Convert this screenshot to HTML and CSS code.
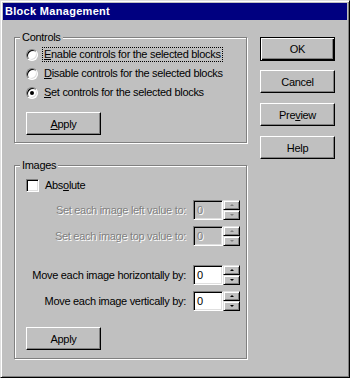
FILE: index.html
```html
<!DOCTYPE html>
<html lang="en">
<head>
    <meta charset="UTF-8">
    <title>Block Management</title>
    <link rel="stylesheet" href="styles.css">
</head>
<body>
    <div class="dialog">
        <div class="titlebar">Block Management</div>
        <div class="dialog-body">
            <div class="groups">
                <fieldset class="group controls">
                    <legend>Controls</legend>
                    <div class="option"><span class="radio"></span><span class="option-text focus"><u>E</u>nable controls for the selected blocks</span></div>
                    <div class="option"><span class="radio"></span><span class="option-text"><u>D</u>isable controls for the selected blocks</span></div>
                    <div class="option"><span class="radio checked"></span><span class="option-text"><u>S</u>et controls for the selected blocks</span></div>
                    <button class="btn apply"><u>A</u>pply</button>
                </fieldset>
                <fieldset class="group images">
                    <legend>Images</legend>
                    <div class="option check-row"><span class="checkbox"></span><span class="option-text">Abs<u>o</u>lute</span></div>
                    <div class="field disabled first">
                        <span class="field-label">Set each image left value to:</span>
                        <span class="edit">0</span>
                        <span class="spin"><span class="spin-btn up"></span><span class="spin-btn down"></span></span>
                    </div>
                    <div class="field disabled">
                        <span class="field-label">Set each image top value to:</span>
                        <span class="edit">0</span>
                        <span class="spin"><span class="spin-btn up"></span><span class="spin-btn down"></span></span>
                    </div>
                    <div class="field move">
                        <span class="field-label">Move each image horizontally by:</span>
                        <span class="edit">0</span>
                        <span class="spin"><span class="spin-btn up"></span><span class="spin-btn down"></span></span>
                    </div>
                    <div class="field">
                        <span class="field-label">Move each image vertically by:</span>
                        <span class="edit">0</span>
                        <span class="spin"><span class="spin-btn up"></span><span class="spin-btn down"></span></span>
                    </div>
                    <button class="btn apply apply-images">Apply</button>
                </fieldset>
            </div>
            <div class="actions">
                <button class="btn default">OK</button>
                <button class="btn">Cancel</button>
                <button class="btn">Pre<u>v</u>iew</button>
                <button class="btn">Help</button>
            </div>
        </div>
    </div>
</body>
</html>
```
FILE: styles.css
```css
body { margin: 0; font-family: "Liberation Sans", Arial, sans-serif; font-size: 11px; letter-spacing: -0.3px; color: #000; }
u { text-decoration-thickness: 1px; text-underline-offset: 1px; }

.dialog { width: 350px; height: 378px; box-sizing: border-box; background: #c0c0c0; border: 1px solid; border-color: #dfdfdf #000 #000 #dfdfdf; box-shadow: inset 1px 1px #fff, inset -1px -1px #808080; padding: 2px; }
.titlebar { height: 17px; line-height: 17px; background: #000080; color: #fff; font-weight: bold; letter-spacing: 0.3px; padding-left: 2px; }

.dialog-body { display: flex; padding: 11px 12px 0 11px; }
.groups { width: 233px; }
.actions { margin-left: 13px; padding-top: 6px; }

.group { margin: 0; min-width: 0; border: 1px solid #808080; box-shadow: 1px 1px #fff, inset 1px 1px #fff; padding: 1px 6px 7px 11px; }
.group legend { padding: 0 2px; margin-left: -6px; line-height: 13px; background: #c0c0c0; }
.images { margin-top: 16px; padding-bottom: 8px; }

.option { display: flex; align-items: center; height: 19px; }
.radio { width: 12px; height: 12px; box-sizing: border-box; flex: none; position: relative; border-radius: 50%; background: #fff; border: 1px solid; border-color: #808080 #fff #fff #808080; box-shadow: inset 1px 1px #000, inset -1px -1px #dfdfdf; }
.radio.checked::after { content: ""; position: absolute; left: 3px; top: 3px; width: 4px; height: 4px; border-radius: 50%; background: #000; }
.checkbox { width: 13px; height: 13px; box-sizing: border-box; flex: none; background: #fff; border: 1px solid; border-color: #808080 #fff #fff #808080; box-shadow: inset 1px 1px #000, inset -1px -1px #dfdfdf; }
.option-text { margin-left: 5px; padding: 0 1px; line-height: 13px; white-space: nowrap; }
.option-text.focus { outline: 1px dotted #000; }
.check-row { margin-top: 3px; }

.btn { display: block; width: 75px; height: 23px; box-sizing: border-box; padding: 0; margin: 0 0 10px; font: inherit; letter-spacing: inherit; color: #000; background: #c0c0c0; border: 1px solid; border-color: #fff #000 #000 #fff; box-shadow: inset -1px -1px #808080; }
.btn.default { height: 24px; margin-bottom: 9px; border-color: #000; box-shadow: inset 1px 1px #fff, inset -1px -1px #000, inset -2px -2px #808080; }
.apply { margin: 10px 0 0; }
.apply-images { margin-top: 16px; }

.field { display: flex; align-items: center; justify-content: flex-end; height: 20px; margin-top: 6px; }
.field.first { margin-top: 5px; }
.field.move { margin-top: 19px; }
.field-label { margin-right: 7px; white-space: nowrap; }
.edit { width: 30px; height: 20px; box-sizing: border-box; padding-left: 3px; line-height: 18px; background: #fff; border: 1px solid; border-color: #808080 #fff #fff #808080; box-shadow: inset 1px 1px #000, inset -1px -1px #dfdfdf; }
.spin { width: 17px; height: 20px; display: flex; flex-direction: column; }
.spin-btn { flex: 1; display: flex; align-items: center; justify-content: center; box-sizing: border-box; background: #c0c0c0; border: 1px solid; border-color: #dfdfdf #000 #000 #dfdfdf; box-shadow: inset 1px 1px #fff, inset -1px -1px #808080; }
.spin-btn::after { content: ""; border-left: 2px solid transparent; border-right: 2px solid transparent; }
.spin-btn.up::after { border-bottom: 2px solid #000; }
.spin-btn.down::after { border-top: 2px solid #000; }

.disabled .field-label, .disabled .edit { color: #808080; text-shadow: 1px 1px 0 #fff; }
.disabled .edit { background: #c0c0c0; }
.disabled .spin-btn.up::after { border-bottom-color: #808080; }
.disabled .spin-btn.down::after { border-top-color: #808080; }
```
